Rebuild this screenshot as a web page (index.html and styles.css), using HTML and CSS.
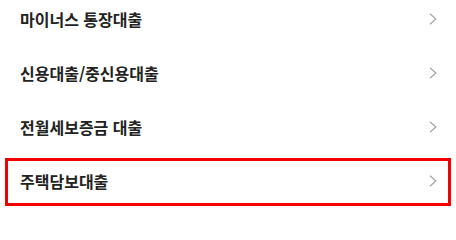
FILE: index.html
```html
<!DOCTYPE html>
<html lang="ko">
<head>
<meta charset="utf-8">
<link rel="stylesheet" href="styles.css">
</head>
<body>
<ul class="menu">
  <li class="item"><span class="label">마이너스 통장대출</span><svg class="chev" viewBox="0 0 8 12" width="8" height="12"><path d="M1 0.8 L6.8 6 L1 11.2" /></svg></li>
  <li class="item"><span class="label">신용대출/중신용대출</span><svg class="chev" viewBox="0 0 8 12" width="8" height="12"><path d="M1 0.8 L6.8 6 L1 11.2" /></svg></li>
  <li class="item"><span class="label">전월세보증금 대출</span><svg class="chev" viewBox="0 0 8 12" width="8" height="12"><path d="M1 0.8 L6.8 6 L1 11.2" /></svg></li>
  <li class="item item-highlight"><span class="label">주택담보대출</span><svg class="chev" viewBox="0 0 8 12" width="8" height="12"><path d="M1 0.8 L6.8 6 L1 11.2" /></svg></li>
</ul>
</body>
</html>
```
FILE: styles.css
```css
html, body {
  margin: 0;
  padding: 0;
  background: #fff;
  overflow: hidden;
}
.menu {
  list-style: none;
  margin: -8px 0 0 0;
  padding: 0;
  font-family: "Noto Sans CJK KR", "Noto Sans", sans-serif;
}
.item {
  position: relative;
  height: 54px;
  display: flex;
  align-items: center;
  justify-content: space-between;
  padding: 0 19px 0 20px;
}
.label {
  font-size: 16px;
  font-weight: 700;
  color: #222;
}
.chev {
  display: block;
  fill: none;
  stroke: #a6a6a6;
  stroke-width: 1.2;
}
.item-highlight::after {
  content: "";
  position: absolute;
  left: 5px;
  right: 5px;
  top: 4px;
  bottom: 2px;
  border: 3px solid #f40000;
}
```
